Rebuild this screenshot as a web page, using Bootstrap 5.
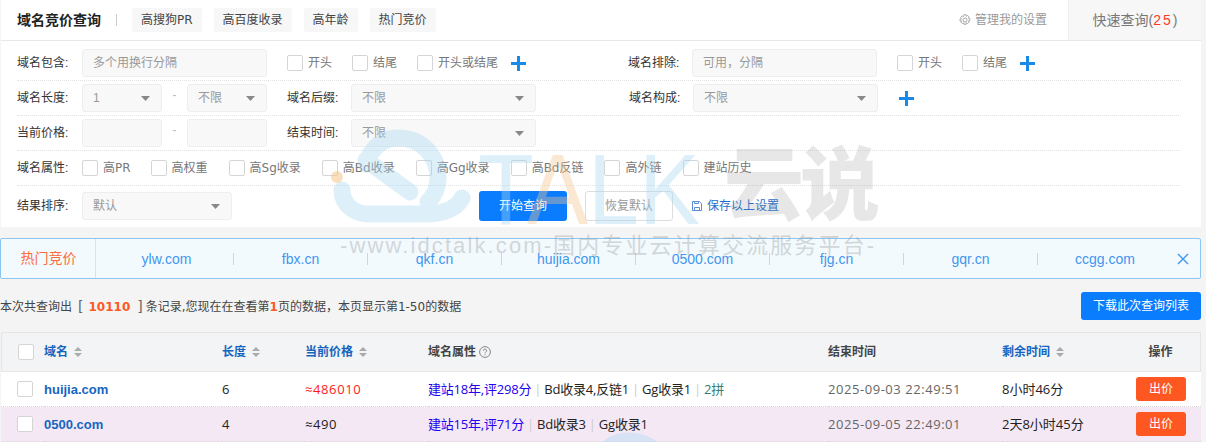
<!DOCTYPE html>
<html lang="zh-CN">
<head>
  <meta charset="UTF-8">
  <title>域名竞价查询</title>
  <link href="https://cdn.jsdelivr.net/npm/bootstrap@5.3.2/dist/css/bootstrap.min.css" rel="stylesheet">
  <style>
    html, body { height: 442px; overflow: hidden; }
    body { background: #f4f4f4; font: 12px/1.5 "Liberation Sans", "Noto Sans CJK SC", sans-serif; color: #333; position: relative; }

    .panel { width: 1200px; height: 227px; margin-left: 1px; background: #fff; }
    .panel-head { height: 41px; border-bottom: 1px solid #e8e8e8; }
    .panel-title { margin-left: 16px; font-size: 14px; font-weight: 700; color: #222; width: 100px; padding-right: 16px; }
    .head-sep { width: 1px; height: 12px; background: #ccc; margin-right: 15px; margin-left: -1px; }
    .head-tab { background: #f7f7f7; border-radius: 3px; height: 24px; line-height: 24px; padding: 0 9px; margin-right: 12px; color: #444; font-family: "DejaVu Sans", "Noto Sans CJK SC", sans-serif; }
    .head-set { color: #999; margin-right: 21px; }
    .head-quick { width: 133px; height: 40px; line-height: 40px; background: #f7f7f7; border-left: 1px solid #eee; font-size: 14px; color: #777; text-align: center; }
    .head-quick b { font-weight: 400; color: #ff3a1f; letter-spacing: 2px; }

    .f-row { margin-left: 16px; width: 1164px; height: 35px; border-bottom: 1px dotted #e2e2e2; }
    .f-row.first { height: 40px; padding-top: 5px; }
    .f-row.last { height: 41px; border-bottom: 0; padding-bottom: 1px; }
    .f-label { width: 65px; flex: none; color: #333; }
    .f-label.tight { width: 64px; }
    .f-label.pad { padding-left: 1px; }
    .f-left { width: 611px; flex: none; }
    .f-ctrl.form-control, .f-ctrl.form-select { height: 28px; min-height: 28px; font-size: 12px; background-color: #f8f8f8; border: 1px solid #eee; border-radius: 3px; color: #999; padding: 0 10px; box-shadow: none; }
    .f-ctrl.form-control::placeholder { color: #999; }
    .f-ctrl.form-select { background-image: url("data:image/svg+xml,%3Csvg xmlns='http://www.w3.org/2000/svg' viewBox='0 0 9 5'%3E%3Cpath fill='%23888' d='M0 0h9L4.5 5z'/%3E%3C/svg%3E"); background-size: 9px 5px; background-position: right 11px center; }
    .w-185 { width: 185px; flex: none; }
    .w-150 { width: 150px; flex: none; }
    .w-80 { width: 80px; flex: none; }
    .dash { width: 25px; text-align: center; color: #bbb; flex: none; margin-top: -6px; }
    .chk { color: #777; margin-right: 20px; white-space: nowrap; font-family: "DejaVu Sans", "Noto Sans CJK SC", sans-serif; }
    .chk.near { margin-right: 13px; }
    .attr-row .chk { margin-right: 21px; }
    .attr-row .chk:nth-child(2) { margin-right: 20px; }
    .chk .form-check-input { width: 16px; height: 16px; margin: 0 5px 0 0; border: 1px solid #d5d5d5; border-radius: 2px; flex: none; }
    .plus { display: inline-block; width: 15px; height: 15px; flex: none; }
    .plus.far { margin-left: 21px; }
    .ms-lbl { margin-left: 20px; }
    .btn-go { width: 88px; height: 30px; padding: 0; font-size: 12px; background: #0a7dff; border: 0; border-radius: 3px; color: #fff; margin-left: 247px; }
    .btn-reset { width: 88px; height: 30px; padding: 0; font-size: 12px; background: #fff; border: 1px solid #ddd; border-radius: 3px; color: #999; margin-left: 18px; }
    .save-link { color: #1f6fd0; text-decoration: none; margin-left: 18px; gap: 4px; }

    .hot { height: 41px; margin-top: 11px; width: 1201px; background: #f3fafe; border: 1px solid #8cc6f0; border-radius: 2px; }
    .hot-label { width: 95px; height: 100%; border-right: 1px solid #cfe6f7; color: #ff6a3c; font-size: 14px; text-align: center; flex: none; margin-right: 4px; line-height: 39px; padding-left: 1px; }
    .hot-item { width: 134px; flex: none; text-align: center; font-size: 14px; line-height: 12px; color: #3f96ee; border-right: 1px solid #b6dcf6; text-decoration: none; }
    .hot-item:nth-last-child(2) { border-right: 0; }
    .hot-close { width: 14px; margin-left: 4px; flex: none; }

    .info { height: 28px; margin-top: 13px; width: 1201px; color: #444; font-family: "DejaVu Sans", "Noto Sans CJK SC", sans-serif; }
    .info b { font-weight: 700; color: #ff5722; }
    .info .num { font-size: 12px; margin: 0 7px 0 5px; }
    .info .br { font-size: 14px; color: #666; margin-left: 6px; }
    .info .br.end { margin-left: 0; margin-right: 3px; }
    .btn-dl { width: 120px; height: 28px; padding: 0; font-size: 12px; background: #0a7dff; border: 0; border-radius: 3px; color: #fff; }

    .list { width: 1200px; margin: 12px 0 0 1px; table-layout: fixed; border-collapse: separate; border-spacing: 0; --bs-table-bg: transparent; margin-bottom: 0; font-size: 13px; font-family: "Open Sans", "Noto Sans CJK SC", sans-serif; }
    .list .c1 { width: 43px; }
    .list .c2 { width: 178px; }
    .list .c3 { width: 83px; }
    .list .c4 { width: 123px; }
    .list .c5 { width: 400px; }
    .list .c6 { width: 174px; }
    .list .c7 { width: 134px; }
    .list th, .list td { padding: 0; vertical-align: middle; }
    .list thead th { height: 40px; background: #f3f4f6; border-top: 1px solid #e5e5e5; border-bottom: 1px solid #e5e5e5; font-size: 12px; font-weight: 700; color: #444; }
    .list thead th:first-child { border-left: 1px solid #e5e5e5; border-radius: 2px 0 0 0; }
    .list thead th:last-child { border-right: 1px solid #e5e5e5; text-align: center; padding-right: 15px; }
    .list thead th.sortable { color: #1565c0; }
    .list tbody td { border-bottom: 1px dotted #d8d8d8; color: #222; }
    .list tbody td:not(:last-child) { padding-top: 2px; }
    .list tbody tr.r1 td { height: 35px; background: #fff; }
    .list tbody tr.r2 td { height: 35px; background: #f4e8f5; }
    .list .form-check-input { width: 16px; height: 16px; margin: 0 0 0 16px; border: 1px solid #d5d5d5; border-radius: 2px; display: block; }
    .list tbody td:first-child { padding-top: 0; }
    .dom { font-weight: 700; color: #1565c0; text-decoration: none; font-family: "Liberation Sans", sans-serif; }
    .sort { display: inline-block; vertical-align: -1px; margin-left: 6px; width: 8px; height: 10px; }
    .tip { display: inline-block; vertical-align: -2px; margin-left: 3px; width: 12px; height: 12px; }
    .list tbody td.t-red { color: #ff1a1a; letter-spacing: .6px; }
    .list tbody td.t-price { letter-spacing: .6px; }
    .list tbody td.t-attr { letter-spacing: -.2px; }
    .t-age { color: #2200ee; }
    .t-sep { color: #ccc; margin: 0 3px; }
    .t-pin { color: #2f7f7f; }
    .list tbody td.t-date { color: #666; letter-spacing: .55px; }
    .btn-bid { width: 50px; height: 24px; padding: 0; font-size: 12px; background: #ff5722; border: 0; border-radius: 3px; color: #fff; display: block; }

    .watermark { position: absolute; left: 0; top: 0; width: 1206px; height: 442px; pointer-events: none; }
    .wm-talk { font: 400 100px "Liberation Sans", sans-serif; fill: #a8d8f2; opacity: .38; }
    .wm-talk .a { fill: #f5c58a; }
    .wm-cn { font: 900 80px "Noto Sans CJK SC", sans-serif; fill: #8c8c8c; opacity: .2; }
    .wm-line { font: 400 22px "Liberation Sans", "Noto Sans CJK SC", sans-serif; fill: #8c8c8c; opacity: .32; }
  </style>
</head>
<body>

<div class="panel">
  <div class="panel-head d-flex align-items-center">
    <div class="panel-title">域名竞价查询</div>
    <span class="head-sep"></span>
    <span class="head-tab">高搜狗PR</span>
    <span class="head-tab">高百度收录</span>
    <span class="head-tab">高年龄</span>
    <span class="head-tab">热门竞价</span>
    <span class="head-set ms-auto d-flex align-items-center gap-1">
      <svg width="12" height="12" viewBox="0 0 12 12" fill="none" stroke="#aaa"><circle cx="6" cy="6" r="2"/><path d="M5 .7h2l.3 1.5 1.3-.8 1.5 1.5-.8 1.3 1.5.3v2l-1.5.3.8 1.3-1.5 1.5-1.3-.8-.3 1.5H5l-.3-1.5-1.3.8-1.5-1.5.8-1.3L1 7V5l1.5-.3-.8-1.3 1.5-1.5 1.3.8z"/></svg>
      管理我的设置
    </span>
    <span class="head-quick">快速查询(<b>25</b>)</span>
  </div>

  <div class="f-row first d-flex align-items-center">
    <div class="f-left d-flex align-items-center">
      <span class="f-label">域名包含:</span>
      <input class="form-control f-ctrl w-185" placeholder="多个用换行分隔">
      <label class="chk d-flex align-items-center ms-lbl"><input class="form-check-input" type="checkbox">开头</label>
      <label class="chk d-flex align-items-center"><input class="form-check-input" type="checkbox">结尾</label>
      <label class="chk near d-flex align-items-center"><input class="form-check-input" type="checkbox">开头或结尾</label>
      <svg class="plus" viewBox="0 0 15 15"><path fill="#1a8ae8" d="M6 0h3v6h6v3H9v6H6V9H0V6h6z"/></svg>
    </div>
    <span class="f-label tight">域名排除:</span>
    <input class="form-control f-ctrl w-185" placeholder="可用，分隔">
    <label class="chk d-flex align-items-center ms-lbl"><input class="form-check-input" type="checkbox">开头</label>
    <label class="chk near d-flex align-items-center"><input class="form-check-input" type="checkbox">结尾</label>
    <svg class="plus" viewBox="0 0 15 15"><path fill="#1a8ae8" d="M6 0h3v6h6v3H9v6H6V9H0V6h6z"/></svg>
  </div>

  <div class="f-row d-flex align-items-center">
    <div class="f-left d-flex align-items-center">
      <span class="f-label">域名长度:</span>
      <select class="form-select f-ctrl w-80"><option>1</option></select>
      <span class="dash">-</span>
      <select class="form-select f-ctrl w-80"><option>不限</option></select>
      <span class="f-label tight ms-lbl">域名后缀:</span>
      <select class="form-select f-ctrl w-185"><option>不限</option></select>
    </div>
    <span class="f-label pad">域名构成:</span>
    <select class="form-select f-ctrl w-185"><option>不限</option></select>
    <svg class="plus far" viewBox="0 0 15 15"><path fill="#1a8ae8" d="M6 0h3v6h6v3H9v6H6V9H0V6h6z"/></svg>
  </div>

  <div class="f-row d-flex align-items-center">
    <span class="f-label">当前价格:</span>
    <input class="form-control f-ctrl w-80">
    <span class="dash">-</span>
    <input class="form-control f-ctrl w-80">
    <span class="f-label tight ms-lbl">结束时间:</span>
    <select class="form-select f-ctrl w-185"><option>不限</option></select>
  </div>

  <div class="f-row attr-row d-flex align-items-center">
    <span class="f-label">域名属性:</span>
    <label class="chk d-flex align-items-center"><input class="form-check-input" type="checkbox">高PR</label>
    <label class="chk d-flex align-items-center"><input class="form-check-input" type="checkbox">高权重</label>
    <label class="chk d-flex align-items-center"><input class="form-check-input" type="checkbox">高Sg收录</label>
    <label class="chk d-flex align-items-center"><input class="form-check-input" type="checkbox">高Bd收录</label>
    <label class="chk d-flex align-items-center"><input class="form-check-input" type="checkbox">高Gg收录</label>
    <label class="chk d-flex align-items-center"><input class="form-check-input" type="checkbox">高Bd反链</label>
    <label class="chk d-flex align-items-center"><input class="form-check-input" type="checkbox">高外链</label>
    <label class="chk d-flex align-items-center"><input class="form-check-input" type="checkbox">建站历史</label>
  </div>

  <div class="f-row last d-flex align-items-center">
    <span class="f-label">结果排序:</span>
    <select class="form-select f-ctrl w-150"><option>默认</option></select>
    <button class="btn btn-go">开始查询</button>
    <button class="btn btn-reset">恢复默认</button>
    <a class="save-link d-flex align-items-center" href="#">
      <svg width="12" height="12" viewBox="0 0 12 12" fill="none" stroke="#5a8fd8"><path d="M1.5 1.5h7l2 2v7h-9zM3.5 10.5v-3h5v3M3.5 1.5v2h4v-2"/></svg>
      保存以上设置
    </a>
  </div>
</div>

<div class="hot d-flex align-items-center">
  <div class="hot-label">热门竞价</div>
  <a class="hot-item" href="#">ylw.com</a>
  <a class="hot-item" href="#">fbx.cn</a>
  <a class="hot-item" href="#">qkf.cn</a>
  <a class="hot-item" href="#">huijia.com</a>
  <a class="hot-item" href="#">0500.com</a>
  <a class="hot-item" href="#">fjg.cn</a>
  <a class="hot-item" href="#">gqr.cn</a>
  <a class="hot-item" href="#">ccgg.com</a>
  <svg class="hot-close" width="12" height="12" viewBox="0 0 12 12"><path d="M1 1l10 10M11 1L1 11" stroke="#3f96ee" stroke-width="1.4"/></svg>
</div>

<div class="info d-flex align-items-center justify-content-between">
  <div>本次共查询出<span class="br">[</span><b class="num">10110</b><span class="br end">]</span>条记录,您现在在查看第<b>1</b>页的数据，本页显示第1-50的数据</div>
  <button class="btn btn-dl">下载此次查询列表</button>
</div>

<table class="table list">
  <colgroup><col class="c1"><col class="c2"><col class="c3"><col class="c4"><col class="c5"><col class="c6"><col class="c7"><col></colgroup>
  <thead>
    <tr>
      <th><input class="form-check-input" type="checkbox"></th>
      <th class="sortable">域名<svg class="sort" viewBox="0 0 8 10"><path fill="#aaa" d="M4 0l4 4H0zM0 6h8l-4 4z"/></svg></th>
      <th class="sortable">长度<svg class="sort" viewBox="0 0 8 10"><path fill="#aaa" d="M4 0l4 4H0zM0 6h8l-4 4z"/></svg></th>
      <th class="sortable">当前价格<svg class="sort" viewBox="0 0 8 10"><path fill="#aaa" d="M4 0l4 4H0zM0 6h8l-4 4z"/></svg></th>
      <th>域名属性<svg class="tip" viewBox="0 0 12 12" fill="none"><circle cx="6" cy="6" r="5.4" stroke="#888"/><path d="M4.4 4.7A1.6 1.6 0 1 1 6.6 6.2c-.5.3-.6.5-.6 1.1M6 8.3v1" stroke="#888"/></svg></th>
      <th>结束时间</th>
      <th class="sortable">剩余时间<svg class="sort" viewBox="0 0 8 10"><path fill="#aaa" d="M4 0l4 4H0zM0 6h8l-4 4z"/></svg></th>
      <th>操作</th>
    </tr>
  </thead>
  <tbody>
    <tr class="r1">
      <td><input class="form-check-input" type="checkbox"></td>
      <td><a class="dom" href="#">huijia.com</a></td>
      <td>6</td>
      <td class="t-red">≈486010</td>
      <td class="t-attr"><span class="t-age">建站18年,评298分</span><span class="t-sep">|</span>Bd收录4,反链1<span class="t-sep">|</span>Gg收录1<span class="t-sep">|</span><span class="t-pin">2拼</span></td>
      <td class="t-date">2025-09-03 22:49:51</td>
      <td>8小时46分</td>
      <td><button class="btn btn-bid">出价</button></td>
    </tr>
    <tr class="r2">
      <td><input class="form-check-input" type="checkbox"></td>
      <td><a class="dom" href="#">0500.com</a></td>
      <td>4</td>
      <td class="t-price">≈490</td>
      <td class="t-attr"><span class="t-age">建站15年,评71分</span><span class="t-sep">|</span>Bd收录3<span class="t-sep">|</span>Gg收录1</td>
      <td class="t-date">2025-09-05 22:49:01</td>
      <td>2天8小时45分</td>
      <td><button class="btn btn-bid">出价</button></td>
    </tr>
  </tbody>
</table>

<svg class="watermark" viewBox="0 0 1206 442">
  <defs>
    <g id="wm-logo" fill="none" stroke="#a8d8f2" stroke-width="17" stroke-linecap="round" stroke-linejoin="round">
      <path d="M366 164C372 146 384 138 398 138c24 0 40 18 40 40 0 10-4 18-10 24"/>
      <path d="M366 160l44 32"/>
      <path d="M342 190c0 14 12 24 26 24h56c16 0 32-4 38-16"/>
    </g>
  </defs>
  <use href="#wm-logo" opacity=".38"/>
  <circle cx="337" cy="177" r="6" fill="#f5c58a" opacity=".55"/>
  <use href="#wm-logo" transform="translate(230 303)" opacity=".38"/>
  <text class="wm-talk" x="478" y="224" textLength="222" lengthAdjust="spacingAndGlyphs">T<tspan class="a">A</tspan>LK</text>
  <text class="wm-cn" x="724" y="213" textLength="156">云说</text>
  <text class="wm-line" x="340" y="253" textLength="534">-www.idctalk.com-国内专业云计算交流服务平台-</text>
</svg>

</body>
</html>
